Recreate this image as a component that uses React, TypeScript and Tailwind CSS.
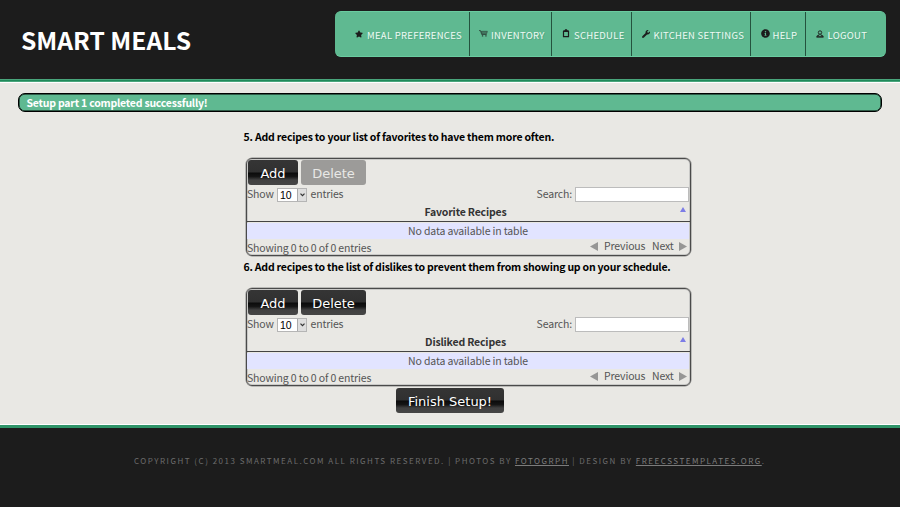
import React from "react";
import { FaStar, FaWrench, FaInfoCircle } from "react-icons/fa";

const CartIcon = () => (
  <svg width="9" height="7" viewBox="0 0 9 7" fill="none" stroke="#1c1c1c" className="opacity-80">
    <path d="M0 .6h1.500l1.200 3.900h5" strokeWidth=".8" />
    <path d="M2.200 1.300h6.200l-.7 2.300H3z" fill="#1c1c1c" fillOpacity=".5" strokeWidth=".5" />
    <path d="M2.900 5.900h1.300M6.300 5.900h1.300" strokeWidth="1.200" />
  </svg>
);

const ClipboardIcon = () => (
  <svg width="8" height="9" viewBox="0 0 8 9" fill="none" stroke="#1c1c1c">
    <path d="M1.500 2.300h5v5.400h-5z" strokeWidth="1.200" />
    <path d="M1.500 2h5M2.900.8h2.200" strokeWidth="1.300" />
  </svg>
);

const UserIcon = () => (
  <svg width="8" height="8" viewBox="0 0 8 8" fill="none" stroke="#1c1c1c">
    <circle cx="4" cy="2.500" r="1.700" strokeWidth=".9" />
    <path d="M3.100 4.200v1L1 5.900v.9h6v-.9L4.900 5.200v-1" strokeWidth=".9" />
    <path d="M.3 7h7.400" strokeWidth=".9" />
  </svg>
);

type NavEntry = { label: string; icon: React.ReactNode; box: string };

const nav: NavEntry[] = [
  { label: "MEAL PREFERENCES", icon: <FaStar size={8} />, box: "w-[135px] pl-5" },
  { label: "INVENTORY", icon: <CartIcon />, box: "w-[82px] pl-[9px]" },
  { label: "SCHEDULE", icon: <ClipboardIcon />, box: "w-[80px] pl-[10px]" },
  { label: "KITCHEN SETTINGS", icon: <FaWrench size={8} />, box: "w-[119px] pl-[9.5px]" },
  { label: "HELP", icon: <FaInfoCircle size={9} />, box: "w-[55px] pl-[9.5px]" },
  { label: "LOGOUT", icon: <UserIcon />, box: "w-[80px] pl-[9.5px]" },
];

function DarkButton({ label, width, disabled }: { label: string; width: string; disabled?: boolean }) {
  return (
    <button
      className={`${width} h-[25px] rounded-[3px] font-['DejaVu_Sans',sans-serif] text-[13px] leading-[27px] whitespace-nowrap ${
        disabled
          ? "bg-[#9c9b99] text-[#e8e8e6]"
          : "bg-[linear-gradient(to_bottom,#353535_0%,#303030_48%,#0b0b0b_52%,#151515_66%,#414141_80%,#454545_100%)] text-white"
      }`}
    >
      {label}
    </button>
  );
}

function RecipeTable({ title, deleteDisabled }: { title: string; deleteDisabled?: boolean }) {
  return (
    <section className="ml-[246px] flex h-[98px] w-[445px] flex-col rounded-[6px] border border-[#4a4a4a] pt-[1px] text-[10.5px] tracking-[-0.14px] text-[#555] shadow-[inset_0_0_0_1px_#c9c9c7,0_0_0_0.5px_#8a8a88]">
      <div className="flex gap-[3px] pl-[1px] tracking-normal">
        <DarkButton label="Add" width="w-[50px]" />
        <DarkButton label="Delete" width="w-[65px]" disabled={deleteDisabled} />
      </div>
      <div className="flex h-[18px] items-start justify-between pr-[1px] leading-[17px]">
        <div className="flex items-start">
          <span className="w-[26px]">Show</span>
          <span className="mt-[3px] ml-[4px] flex h-[14px] w-[30px] border border-[#b5b5b5] bg-white font-['Liberation_Sans',sans-serif] text-[10.5px] leading-[12px] tracking-normal text-black">
            <span className="w-[19px] pl-[2px]">10</span>
            <span className="flex flex-1 items-center justify-center border-l border-[#aaa] bg-[#dedede]">
              <svg width="5" height="4" viewBox="0 0 5 4" fill="none" stroke="#333"><path d="M.5.7l2 2 2-2" strokeWidth="1.200" /></svg>
            </span>
          </span>
          <span className="ml-[3.5px]">entries</span>
        </div>
        <div className="flex items-start gap-[3px]">
          <span>Search:</span>
          <span className="mt-[2px] h-[15px] w-[114px] border border-[#bcbcbc] bg-white" />
        </div>
      </div>
      <div className="relative h-[19px] border-b border-[#444] pr-[6px] text-center font-bold tracking-[-0.17px] leading-[18px] text-[#333]">
        {title}
        <span className="absolute top-[4px] right-[4px] h-0 w-0 border-x-[3px] border-b-[5px] border-x-transparent border-b-[#7d7de6]" />
      </div>
      <div className="mt-[1px] mr-[1px] h-[16px] bg-[#e2e4ff] text-center leading-[15px]">No data available in table</div>
      <div className="flex justify-between leading-[14px]">
        <span className="pt-[2px]">Showing 0 to 0 of 0 entries</span>
        <span className="flex h-[14px] items-center pr-[3px]">
          <svg width="8" height="9" viewBox="0 0 8 9"><path d="M8 0v9L0 4.500z" fill="#969695" /></svg>
          <span className="ml-[6px] w-[42px]">Previous</span>
          <span className="ml-[6px] w-[22px]">Next</span>
          <svg className="ml-[5px]" width="8" height="9" viewBox="0 0 8 9"><path d="M0 0v9l8-4.500z" fill="#969695" /></svg>
        </span>
      </div>
    </section>
  );
}

export default function App() {
  return (
    <div className="h-[507px] w-[900px] overflow-hidden bg-[#e9e8e4] font-['Noto_Sans_CJK_SC','Noto_Sans_CJK_JP',sans-serif] whitespace-nowrap">
      <header className="flex h-[79px] items-start bg-[#1c1c1c]">
        <h1 className="mt-[19px] ml-[21px] w-[314px] text-[24.6px] font-bold leading-[40px] text-white">SMART MEALS</h1>
        <nav className="mt-[11px] flex h-[46px] w-[551px] overflow-hidden rounded-[6px] border-y border-[#6acca0] bg-[#5fb991]">
          {nav.map((item, i) => (
            <a key={item.label} className={`${item.box} flex pt-[14px] text-[9.5px] leading-[18px] text-[#eefaf4] ${i < nav.length - 1 ? "border-r border-[#24523e]" : ""}`}>
              <span className="flex h-[15px] w-[12px] shrink-0 items-center text-[#1c1c1c]">{item.icon}</span>
              <span className="tracking-[0.27px] [text-shadow:1px_1px_0_rgba(30,90,60,0.2)]">{item.label}</span>
            </a>
          ))}
        </nav>
      </header>
      <div className="h-[3px] border-y border-[#49a57b] bg-[#20895a]" />
      <main className="h-[343px] border-y border-white pt-[10px]">
        <div className="ml-[18px] flex h-[19px] w-[864px] items-center rounded-[7px] border border-black bg-[#5fb991] pl-[7.5px] text-[10.5px] font-bold leading-[17px] tracking-[-0.22px] text-white shadow-[inset_0_0_0_0.5px_#000]">
          <span>Setup part 1 completed successfully!</span>
        </div>
        <h2 className="mt-[16px] mb-[13px] ml-[243.5px] text-[10.5px] font-bold leading-[17px] tracking-[-0.2px] text-black">5. Add recipes to your list of favorites to have them more often.</h2>
        <RecipeTable title="Favorite Recipes" deleteDisabled />
        <h2 className="mt-[2px] mb-[13px] ml-[243.5px] text-[10.5px] font-bold leading-[17px] tracking-[-0.22px] text-black">6. Add recipes to the list of dislikes to prevent them from showing up on your schedule.</h2>
        <RecipeTable title="Disliked Recipes" />
        <div className="mt-[2px] ml-[396px] flex">
          <DarkButton label="Finish Setup!" width="w-[108px]" />
        </div>
      </main>
      <footer className="h-[82px] border-t-[3px] border-[#2f9468] bg-[#1c1c1c] pt-[27px] pl-[134px] text-[8px] leading-[12px] tracking-[1.5px] text-[#6c6c6c]">
        COPYRIGHT (C) 2013 SMARTMEAL.COM ALL RIGHTS RESERVED. | PHOTOS BY <a className="text-[#7c7c7c] underline">FOTOGRPH</a> | DESIGN BY <a className="text-[#7c7c7c] underline">FREECSSTEMPLATES.ORG</a>.
      </footer>
    </div>
  );
}
